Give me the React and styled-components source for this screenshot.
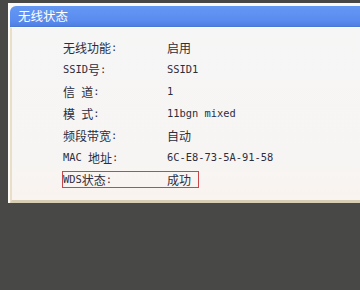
import React from 'react';
import styled, { createGlobalStyle } from 'styled-components';

const GlobalStyle = createGlobalStyle`
  html, body {
    margin: 0;
    padding: 0;
    background: #484846;
  }
  body {
    font-family: "Noto Sans CJK SC", "Liberation Sans", sans-serif;
  }
`;

const rows = [
  { label: '无线功能:', value: '启用' },
  { label: 'SSID号:', value: 'SSID1' },
  { label: '信 道:', value: '1' },
  { label: '模 式:', value: '11bgn mixed' },
  { label: '频段带宽:', value: '自动' },
  { label: 'MAC 地址:', value: '6C-E8-73-5A-91-58' },
  { label: 'WDS状态:', value: '成功', highlight: true },
];

// Han characters get the 12px CJK face, everything else the narrow mono face
function Mixed({ text }) {
  return text
    .split(/([\u4e00-\u9fff]+)/)
    .filter(Boolean)
    .map((part, i) =>
      /[\u4e00-\u9fff]/.test(part) ? <Han key={i}>{part}</Han> : <Latin key={i}>{part}</Latin>
    );
}

function App() {
  return (
    <Screen>
      <GlobalStyle />
      <Panel>
        <TitleBar>无线状态</TitleBar>
        <Body>
          {rows.map((row) => (
            <Row key={row.label} highlight={row.highlight}>
              <Label><Mixed text={row.label} /></Label>
              <Value><Mixed text={row.value} /></Value>
            </Row>
          ))}
        </Body>
      </Panel>
    </Screen>
  );
}

const Screen = styled.div`
  width: 360px;
  height: 290px;
  overflow: hidden;
  background: #484846;
  padding: 3px 0 0 8px;
  box-sizing: border-box;
`;

const Panel = styled.section`
  width: 360px;
  background: #fbfaf8;
  border-left: 2px solid #fdfcf9;
  padding-top: 3px;
`;

const TitleBar = styled.div`
  height: 20px;
  border-radius: 6px 0 0 0;
  background: linear-gradient(#6498f3, #5a8cf0 70%, #4f7fe0);
  border-bottom: 1px solid #4a78d6;
  color: #fff;
  font-size: 12.5px;
  line-height: 20px;
  padding-left: 8px;
`;

const Body = styled.div`
  background: linear-gradient(#f6f6f6, #f7f5f3 80%, #faf3ef);
  border-left: 2px solid #e9dfc9;
  border-top: 1px solid #fefefe;
  border-bottom: 3px solid #d8cdb5;
  padding: 11px 0 12px 51px;
  display: flex;
  flex-direction: column;
  gap: 5px;
`;

const Row = styled.div`
  display: flex;
  align-items: center;
  height: 17px;
  box-sizing: border-box;
  width: 137px;
  margin-left: -1px;
  border: 1px solid ${(p) => (p.highlight ? '#c9474a' : 'transparent')};
  color: #2d2d3c;
`;

const Label = styled.span`
  width: 104px;
  flex: none;
  display: flex;
  align-items: center;
  line-height: 1;
`;

const Value = styled.span`
  display: flex;
  align-items: center;
  line-height: 1;
  white-space: nowrap;
`;

const Han = styled.span`
  font-family: "Noto Sans CJK SC", sans-serif;
  font-size: 12px;
`;

const Latin = styled.span`
  font-family: "DejaVu Sans Mono", monospace;
  font-size: 10.4px;
  white-space: pre;
`;

export default App;
